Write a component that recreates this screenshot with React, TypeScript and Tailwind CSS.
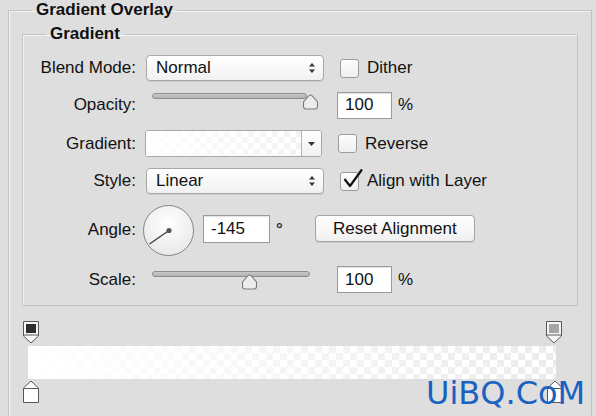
import React from 'react';

function Chevrons() {
  return (
    <svg width="8" height="12" viewBox="0 0 8 12" className="shrink-0">
      <path d="M1 4.5 L4 1 L7 4.5 Z" fill="#333" />
      <path d="M1 7.5 L4 11 L7 7.5 Z" fill="#333" />
    </svg>
  );
}

function Select({ value }: { value: string }) {
  return (
    <div className="ml-[10px] w-[178px] h-[26px] flex items-center justify-between pl-[9px] pr-[7px] rounded-[4px] border border-[#a8a8a8] bg-gradient-to-b from-white to-[#f1f1f1] shadow-[0_1px_0_rgba(0,0,0,0.08)]">
      <span>{value}</span>
      <Chevrons />
    </div>
  );
}

function Checkbox({ label, checked }: { label: string; checked?: boolean }) {
  return (
    <div className="flex items-center ml-[16px]">
      <div className="relative w-[19px] h-[19px] rounded-[3px] border border-[#9c9c9c] bg-gradient-to-b from-[#fdfdfd] to-[#efefef]">
        {checked && (
          <svg width="22" height="22" viewBox="0 0 22 22" className="absolute left-[1px] top-[-6px]">
            <path d="M2.5 12 L8 19 L20 2.5" fill="none" stroke="#111" strokeWidth="2.2" strokeLinejoin="round" />
          </svg>
        )}
      </div>
      <span className="ml-[8px]">{label}</span>
    </div>
  );
}

function NumInput({ value, wide }: { value: string; wide?: boolean }) {
  return (
    <div
      className={`flex items-center pl-[7px] bg-white border border-[#9a9a9a] shadow-[inset_0_1px_1px_rgba(0,0,0,0.12)] ${
        wide ? 'w-[67px] h-[28px]' : 'w-[55px] h-[27px]'
      }`}
    >
      {value}
    </div>
  );
}

function Thumb() {
  return (
    <svg width="17" height="16" viewBox="0 0 17 16">
      <path
        d="M8.5 1 C9.2 1 9.8 1.4 10.3 2 L15.5 8 V12.5 C15.5 14 14.5 15 13 15 H4 C2.5 15 1.5 14 1.5 12.5 V8 L6.7 2 C7.2 1.4 7.8 1 8.5 1 Z"
        fill="#ececec"
        stroke="#7a7a7a"
        strokeWidth="1.1"
      />
    </svg>
  );
}

function Slider({ thumb, trackTop, thumbTop, width }: { thumb: number; trackTop: string; thumbTop: string; width: string }) {
  return (
    <div className={`relative h-[26px] ml-[16px] ${width}`}>
      <div className={`absolute left-0 right-0 h-[6px] rounded-full border border-[#8e8e8e] bg-gradient-to-b from-[#c9c9c9] to-[#b3b3b3] ${trackTop}`} />
      <div className={`absolute ${thumbTop}`} style={{ left: thumb - 8 }}>
        <Thumb />
      </div>
    </div>
  );
}

function Label({ children }: { children: React.ReactNode }) {
  return <div className="w-[113px] text-right shrink-0">{children}</div>;
}

function TopStop({ inner }: { inner: string }) {
  return (
    <svg width="16" height="23" viewBox="0 0 16 23">
      <path d="M0.5 0.5 H15.5 V15 L8 22 L0.5 15 Z" fill="#f6f6f6" stroke="#585858" />
      <path d="M0.5 14 H15.5" stroke="#585858" />
      <rect x="3" y="3" width="10" height="9" fill={inner} />
    </svg>
  );
}

function BottomStop() {
  return (
    <svg width="16" height="23" viewBox="0 0 16 23">
      <path d="M8 1 L15.5 8 V22.5 H0.5 V8 Z" fill="#ffffff" stroke="#585858" />
      <path d="M0.5 8.5 H15.5" stroke="#585858" />
    </svg>
  );
}

export default function App() {
  return (
    <div className="w-[596px] h-[416px] overflow-hidden relative bg-[#dedede] text-[17px] leading-[20px] text-[#111] font-['Liberation_Sans',Arial,sans-serif]">
      <fieldset className="ml-[8px] w-[584px] h-[440px] px-[13px] border border-[#c3c3c3] shadow-[inset_1px_1px_0_#f3f3f3]">
        <legend className="ml-[10px] px-[4px] font-bold leading-[20px]">Gradient Overlay</legend>

        <fieldset className="mt-[4px] pt-[11px] pb-[12px] border border-[#c3c3c3] shadow-[inset_1px_1px_0_#f3f3f3]">
          <legend className="ml-[23px] px-[4px] font-bold leading-[20px]">Gradient</legend>

          <div className="flex flex-col gap-[11px]">
            <div className="flex items-center h-[26px]">
              <Label>Blend Mode:</Label>
              <Select value="Normal" />
              <Checkbox label="Dither" />
            </div>

            <div className="flex items-center h-[26px]">
              <Label>Opacity:</Label>
              <Slider thumb={158} trackTop="top-[1px]" thumbTop="top-[2px]" width="w-[155px]" />
              <div className="ml-[30px]">
                <NumInput value="100" />
              </div>
              <span className="ml-[6px]">%</span>
            </div>

            <div className="flex items-center h-[27px] mt-[1px]">
              <Label>Gradient:</Label>
              <div className="ml-[9px] w-[177px] h-[27px] flex border border-[#a8a8a8] rounded-[3px] overflow-hidden bg-white">
                <div className="flex-1 [background-image:linear-gradient(90deg,rgba(255,255,255,.95),rgba(255,255,255,.55)),repeating-conic-gradient(#e4e4e4_0%_25%,#fff_0%_50%)] [background-size:auto,12px_12px]" />
                <div className="w-[20px] border-l border-[#b5b5b5] flex items-center justify-center bg-gradient-to-b from-white to-[#f1f1f1]">
                  <svg width="7" height="4" viewBox="0 0 7 4">
                    <path d="M0 0 H7 L3.5 4 Z" fill="#333" />
                  </svg>
                </div>
              </div>
              <Checkbox label="Reverse" />
            </div>

            <div className="flex items-center h-[26px]">
              <Label>Style:</Label>
              <Select value="Linear" />
              <Checkbox label="Align with Layer" checked />
            </div>

            <div className="flex items-start h-[50px]">
              <Label>
                <div className="mt-[15px]">Angle:</div>
              </Label>
              <div className="ml-[7px] w-[51px] h-[51px] rounded-full border border-[#858585] bg-[radial-gradient(circle_at_50%_35%,#ffffff,#e4e4e4)]">
                <svg width="49" height="49" viewBox="0 0 49 49">
                  <line x1="25" y1="24.5" x2="5.5" y2="38" stroke="#444" strokeWidth="1.5" />
                  <circle cx="25" cy="24.5" r="2.6" fill="#555" />
                </svg>
              </div>
              <div className="ml-[9px] mt-[10px]">
                <NumInput value="-145" wide />
              </div>
              <span className="ml-[6px] mt-[15px] text-[17px] font-bold text-[#333]">°</span>
              <div className="ml-[32px] mt-[10px] w-[160px] h-[27px] flex items-center justify-center rounded-[4px] border border-[#a3a3a3] bg-gradient-to-b from-white to-[#f0f0f0] shadow-[0_1px_0_rgba(0,0,0,0.08)]">
                Reset Alignment
              </div>
            </div>

            <div className="flex items-center h-[27px]">
              <Label>Scale:</Label>
              <Slider thumb={97} trackTop="top-[4px]" thumbTop="top-[7px]" width="w-[158px]" />
              <div className="ml-[27px]">
                <NumInput value="100" />
              </div>
              <span className="ml-[6px]">%</span>
            </div>
          </div>
        </fieldset>

        <div className="relative mt-[15px] pt-[25px] h-[84px]">
          <div className="absolute left-[1px] top-0">
            <TopStop inner="#2e2e2e" />
          </div>
          <div className="absolute left-[524px] top-0">
            <TopStop inner="#a5a5a5" />
          </div>
          <div className="ml-[6px] w-[528px] h-[33px] [background-image:linear-gradient(90deg,rgba(255,255,255,1),rgba(255,255,255,.35)),repeating-conic-gradient(#e2e2e2_0%_25%,#fff_0%_50%)] [background-size:auto,14px_14px]" />
          <div className="absolute left-[1px] top-[59px]">
            <BottomStop />
          </div>
          <div className="absolute left-[525px] top-[59px]">
            <BottomStop />
          </div>
        </div>
      </fieldset>

      <div className="absolute left-[426px] top-[374px] text-[32px] leading-[38px] text-[#1a62c2] font-['DejaVu_Sans',sans-serif]">
        UiBQ.CoM
      </div>
    </div>
  );
}
